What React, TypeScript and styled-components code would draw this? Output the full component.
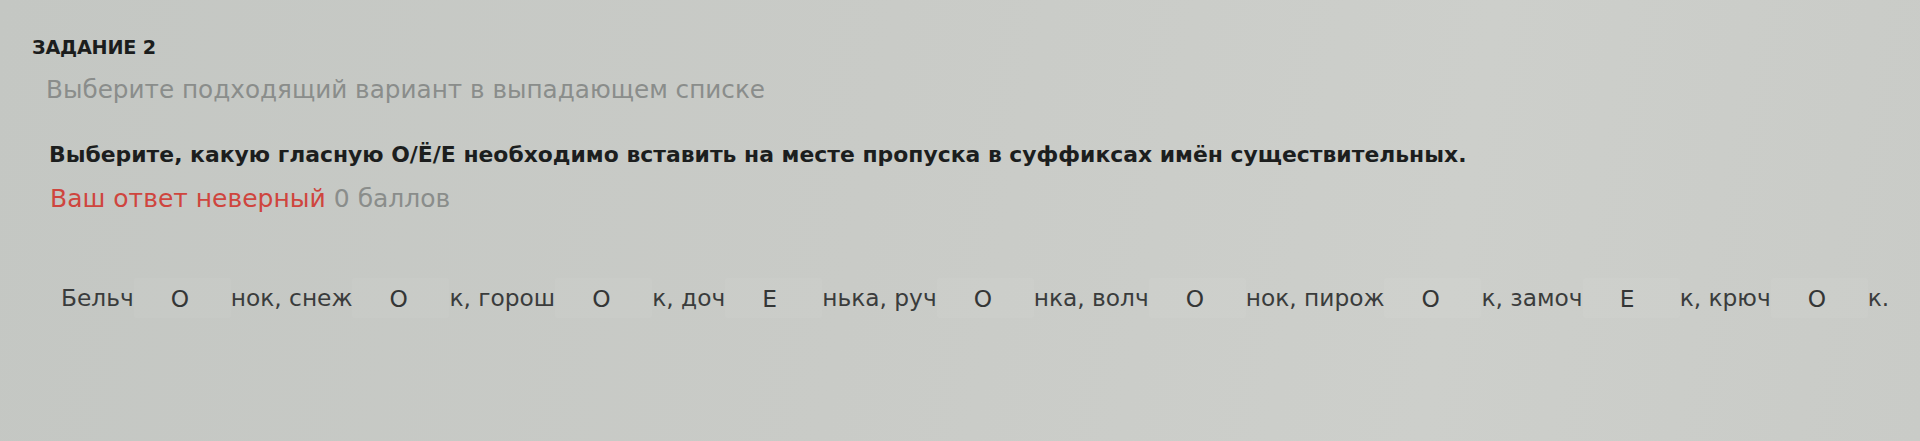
import React from "react";
import styled, { createGlobalStyle } from "styled-components";

const GlobalStyle = createGlobalStyle`
  html, body {
    margin: 0;
    padding: 0;
  }
  body {
    background: #c8cac6;
    font-family: "DejaVu Sans", "Liberation Sans", sans-serif;
  }
`;

const Page = styled.div`
  display: flex;
  flex-direction: column;
  align-items: flex-start;
  min-height: 441px;
  box-sizing: border-box;
  padding-top: 36px;
  background: linear-gradient(100deg, #c4c7c3 0%, #c9cbc7 45%, #cdcfcb 75%, #c9cbc7 100%);
`;

const TaskTitle = styled.div`
  margin-left: 32px;
  font-size: 19.2px;
  line-height: 23px;
  font-weight: 700;
  color: #1b1d1d;
  letter-spacing: -0.2px;
`;

const Hint = styled.div`
  margin: 17px 0 0 46px;
  font-size: 24.7px;
  line-height: 28px;
  color: #8a8d8b;
`;

const Question = styled.div`
  margin: 38px 0 0 49px;
  font-size: 21.9px;
  line-height: 26px;
  font-weight: 700;
  color: #1c1e1e;
`;

const Result = styled.div`
  margin: 17px 0 0 50px;
  font-size: 25px;
  line-height: 28px;
  color: #8a8d8b;
`;

const Wrong = styled.span`
  color: #cf453e;
`;

const Sentence = styled.div`
  display: flex;
  align-items: center;
  margin: 65px 0 0 61px;
  height: 40px;
  font-size: 23.3px;
  color: #3a3c3c;
  white-space: pre;
`;

const Fragment = styled.span`
  line-height: 40px;
`;

const Select = styled.span`
  display: inline-flex;
  align-items: center;
  box-sizing: border-box;
  width: 97px;
  height: 40px;
  padding-left: 37px;
  background: rgba(255, 255, 255, 0.045);
  border-radius: 2px;
  color: #343636;
`;

type Gap = { before: string; answer: string };

const parts: Gap[] = [
  { before: "Бельч", answer: "О" },
  { before: "нок, снеж", answer: "О" },
  { before: "к, горош", answer: "О" },
  { before: "к, доч", answer: "Е" },
  { before: "нька, руч", answer: "О" },
  { before: "нка, волч", answer: "О" },
  { before: "нок, пирож", answer: "О" },
  { before: "к, замоч", answer: "Е" },
  { before: "к, крюч", answer: "О" },
];

const App: React.FC = () => (
  <>
    <GlobalStyle />
    <Page>
      <TaskTitle>ЗАДАНИЕ 2</TaskTitle>
      <Hint>Выберите подходящий вариант в выпадающем списке</Hint>
      <Question>
        Выберите, какую гласную О/Ё/Е необходимо вставить на месте пропуска в суффиксах имён существительных.
      </Question>
      <Result>
        <Wrong>Ваш ответ неверный</Wrong> 0 баллов
      </Result>
      <Sentence>
        {parts.map((p, i) => (
          <React.Fragment key={i}>
            <Fragment>{p.before}</Fragment>
            <Select>{p.answer}</Select>
          </React.Fragment>
        ))}
        <Fragment>к.</Fragment>
      </Sentence>
    </Page>
  </>
);

export default App;
